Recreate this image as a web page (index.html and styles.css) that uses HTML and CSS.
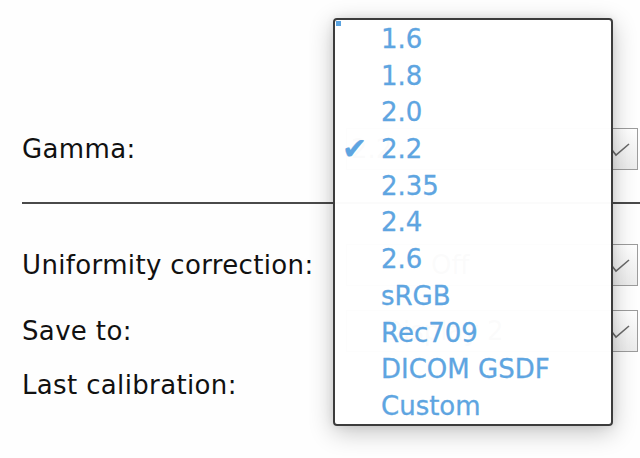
FILE: index.html
```html
<!DOCTYPE html>
<html>
<head>
<meta charset="utf-8">
<link rel="stylesheet" href="styles.css">
</head>
<body>
<div class="page">
  <div class="form">
    <div class="row row-gamma">
      <div class="label">Gamma:</div>
      <div class="select"><span class="value">2.2</span><svg class="chev" width="20" height="14" viewBox="0 0 20 14"><polyline points="1,7 5,12 18,1" fill="none" stroke="#6a6a6a" stroke-width="1.6"/></svg></div>
    </div>
    <div class="rule"></div>
    <div class="row row-unif">
      <div class="label">Uniformity correction:</div>
      <div class="select"><span class="value value-off">Off</span><svg class="chev" width="20" height="14" viewBox="0 0 20 14"><polyline points="1,7 5,12 18,1" fill="none" stroke="#6a6a6a" stroke-width="1.6"/></svg></div>
    </div>
    <div class="row row-save">
      <div class="label">Save to:</div>
      <div class="select"><span class="value value-save">Display 2</span><svg class="chev" width="20" height="14" viewBox="0 0 20 14"><polyline points="1,7 5,12 18,1" fill="none" stroke="#6a6a6a" stroke-width="1.6"/></svg></div>
    </div>
    <div class="row row-last">
      <div class="label">Last calibration:</div>
    </div>
  </div>

  <div class="popup">
    <span class="focus"></span>
    <ul class="menu">
      <li class="item"><span class="check"></span><span>1.6</span></li>
      <li class="item"><span class="check"></span><span>1.8</span></li>
      <li class="item"><span class="check"></span><span>2.0</span></li>
      <li class="item"><span class="check">✔</span><span>2.2</span></li>
      <li class="item"><span class="check"></span><span>2.35</span></li>
      <li class="item"><span class="check"></span><span>2.4</span></li>
      <li class="item"><span class="check"></span><span>2.6</span></li>
      <li class="item"><span class="check"></span><span>sRGB</span></li>
      <li class="item"><span class="check"></span><span>Rec709</span></li>
      <li class="item"><span class="check"></span><span>DICOM GSDF</span></li>
      <li class="item"><span class="check"></span><span>Custom</span></li>
    </ul>
  </div>
</div>
</body>
</html>
```

FILE: styles.css
```css
html, body {
  margin: 0;
  padding: 0;
  background: #ffffff;
}
body {
  font-family: "DejaVu Sans", Verdana, sans-serif;
  font-size: 26px;
  color: #111111;
}
.page {
  position: relative;
  width: 640px;
  height: 458px;
  overflow: hidden;
  background: #fefefe;
}
.form {
  padding-top: 128px;
  padding-left: 22px;
  display: flex;
  flex-direction: column;
}
.row {
  display: grid;
  grid-template-columns: 324px 292px;
  height: 42px;
  align-items: center;
}
.label {
  line-height: 42px;
  white-space: nowrap;
  letter-spacing: 0.35px;
}
.rule {
  margin-top: 32px;
  height: 2px;
  background: #4a4a4a;
}
.row-unif { margin-top: 40px; }
.row-save { margin-top: 24px; }
.row-last { margin-top: 12px; }
.select {
  height: 42px;
  box-sizing: border-box;
  border: 1px solid #9c9c9c;
  background: linear-gradient(#ffffff, #ececec);
  display: flex;
  align-items: center;
  color: #555;
}
.value {
  padding-left: 4px;
  flex: 1;
}
.value-off { padding-left: 84px; }
.value-save { padding-left: 36px; }
.chev {
  margin-right: 6px;
  margin-top: 2px;
}
.popup {
  position: absolute;
  left: 333px;
  top: 18px;
  width: 280px;
  height: 408px;
  box-sizing: border-box;
  border: 2px solid #3c3c3c;
  border-radius: 4px;
  background: rgba(255, 255, 255, 0.975);
  box-shadow: 0 6px 24px rgba(0, 0, 0, 0.24), 0 0 8px rgba(0, 0, 0, 0.08);
}
.focus {
  position: absolute;
  left: 1px;
  top: 1px;
  width: 5px;
  height: 5px;
  background: #5ba3e0;
}
.menu {
  list-style: none;
  margin: 0;
  padding: 1px 0 0 0;
}
.item {
  display: grid;
  grid-template-columns: 46px 1fr;
  height: 36.7px;
  line-height: 36.7px;
  color: #5ea5e1;
  white-space: nowrap;
  -webkit-text-stroke: 0.3px #5ea5e1;
}
.check {
  padding-left: 7px;
  font-size: 30px;
  color: #5ea5e1;
}
```
